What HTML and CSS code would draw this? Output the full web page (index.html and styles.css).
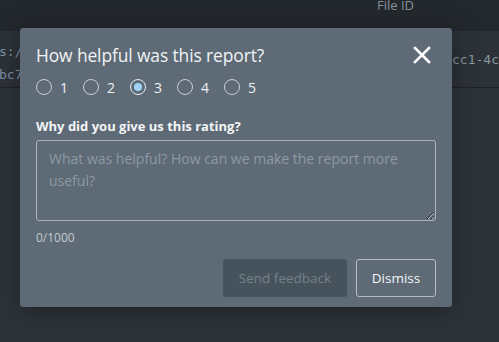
FILE: index.html
```html
<!DOCTYPE html>
<html>
<head>
<meta charset="utf-8">
<link rel="stylesheet" href="styles.css">
</head>
<body>
<div class="page">
  <div class="thead"><span class="th-file">File ID</span></div>
  <div class="row">
    <div class="cell-left"><span>s:/</span><span>bc7</span></div>
    <div class="cell-right">ecc1-4c</div>
  </div>
  <div class="rest"></div>
</div>
<div class="modal">
  <div class="m-head">
    <h2 class="m-title">How helpful was this report?</h2>
    <button class="m-close" aria-label="Close">
      <svg width="18" height="18" viewBox="0 0 18 18"><path d="M2 2 L16 16 M16 2 L2 16" stroke="#fff" stroke-width="2.6" stroke-linecap="square"/></svg>
    </button>
  </div>
  <div class="radios">
    <label class="radio"><span class="dot"></span>1</label>
    <label class="radio"><span class="dot"></span>2</label>
    <label class="radio"><span class="dot on"></span>3</label>
    <label class="radio"><span class="dot"></span>4</label>
    <label class="radio"><span class="dot"></span>5</label>
  </div>
  <div class="q">Why did you give us this rating?</div>
  <textarea class="ta" placeholder="What was helpful? How can we make the report more useful?"></textarea>
  <div class="count">0/1000</div>
  <div class="actions">
    <button class="btn send">Send feedback</button>
    <button class="btn dismiss">Dismiss</button>
  </div>
</div>
</body>
</html>
```
FILE: styles.css
```css
* { box-sizing: border-box; }
html, body { margin: 0; padding: 0; }
body {
  width: 499px; height: 342px; overflow: hidden;
  background: #2d3339;
  font-family: "Open Sans", "Noto Sans", sans-serif;
  position: relative;
}
.page { display: flex; flex-direction: column; height: 342px; }
.thead {
  height: 31px; background: #23282d;
  display: flex; align-items: flex-start;
}
.th-file {
  margin-left: 377px; margin-top: -3px;
  color: #87929b; font-size: 13px; line-height: 16px;
}
.row {
  height: 57px; background: #2c3238;
  border-bottom: 1px solid #1e2327;
  display: flex; justify-content: space-between;
  font-family: "DejaVu Sans Mono", monospace; font-size: 13px;
  color: #7f93a6;
}
.cell-left { display: flex; flex-direction: column; padding-top: 9px; line-height: 23px; margin-left: -1px; }
.cell-right { padding-top: 21px; color: #8996a1; }
.rest { flex: 1; background: #2d3339; }

.modal {
  position: absolute; left: 20px; top: 28px;
  width: 432px; height: 279px;
  background: #5e6b76;
  border-radius: 3px;
  box-shadow: 0 4px 24px rgba(0,0,0,0.35);
  padding: 14px 16px 0 16px;
  display: flex; flex-direction: column;
  color: #fff;
}
.m-head { display: flex; justify-content: space-between; align-items: center; height: 26px; }
.m-title { margin: 0; font-size: 17.4px; font-weight: 400; color: #f1f3f5; letter-spacing: -0.1px; }
.m-close { background: none; border: 0; padding: 0; margin-right: 5px; width: 18px; height: 18px; display: flex; }
.radios { display: flex; gap: 0; margin-top: 6px; height: 26px; align-items: center; }
.radio {
  display: flex; align-items: center; width: 47px;
  font-size: 14px; color: #eef1f3;
}
.dot {
  width: 16px; height: 16px; border-radius: 50%;
  border: 1px solid #c9d0d5; margin-right: 8px;
  display: inline-block; position: relative;
}
.dot.on { border: 1.5px solid #e7edf2; }
.dot.on::after {
  content: ""; position: absolute; left: 2.5px; top: 2.5px;
  width: 8px; height: 8px; border-radius: 50%; background: #9fd4f6;
}
.q { margin-top: 17px; font-size: 13px; font-weight: 700; color: #f3f5f6; height: 20px; }
.ta {
  margin-top: 3px; width: 400px; height: 81px;
  background: transparent; border: 1px solid #aab3ba; border-radius: 3px;
  padding: 7px 12px; resize: vertical;
  font-family: inherit; font-size: 14px; line-height: 22px; color: #fff;
}
.ta::placeholder { color: #8d99a3; }
.count { margin-top: 8px; font-size: 12px; color: #c3c9ce; }
.actions { display: flex; justify-content: flex-end; gap: 9px; margin-top: 13px; }
.btn {
  height: 38px; border-radius: 3px; font-family: inherit; font-size: 13.5px; padding: 0;
}
.send { width: 124px; background: #47535c; border: 0; color: #74818b; }
.dismiss { width: 80px; background: transparent; border: 1px solid #b4bcc2; color: #f3f5f6; }
```
